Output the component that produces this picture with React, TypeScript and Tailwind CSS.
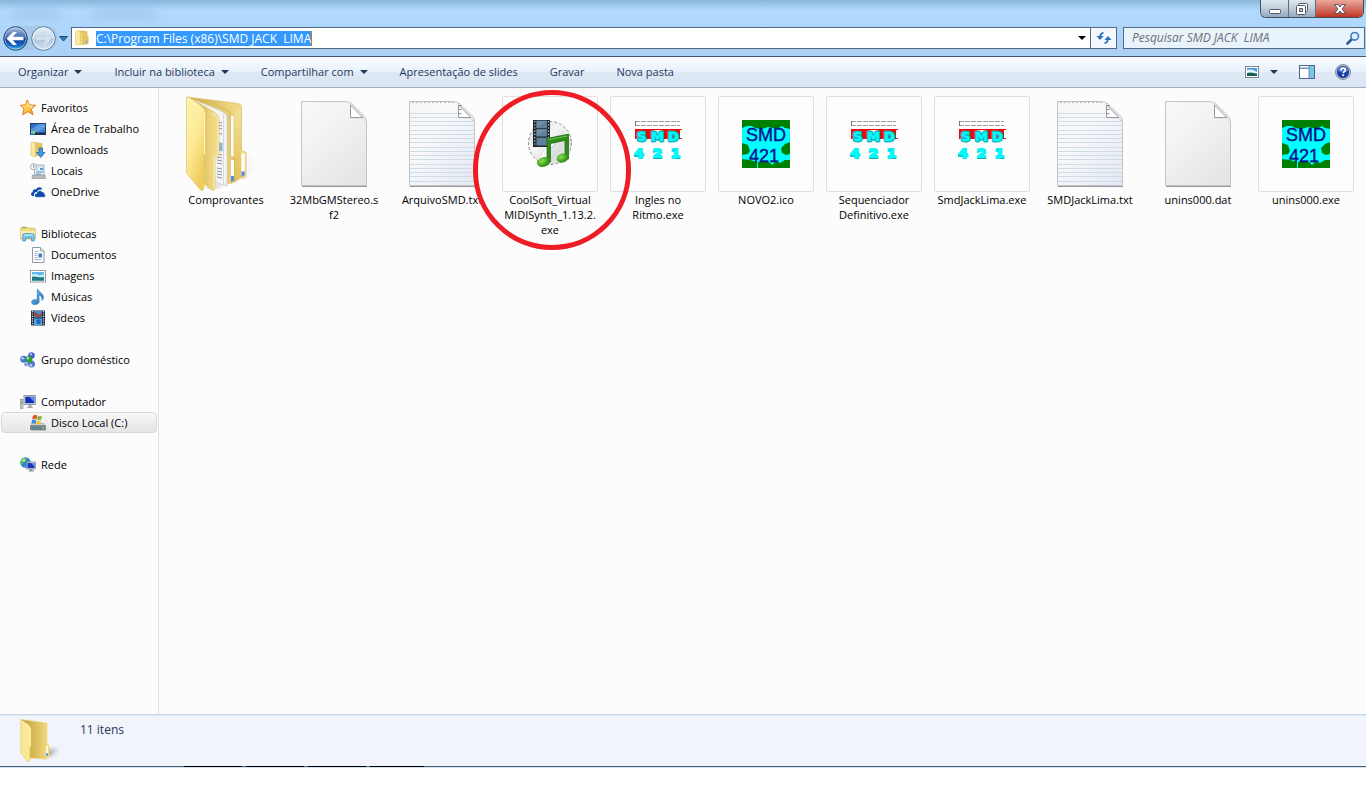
import type { ReactNode } from "react";

/* ---------- small icons (16px) ---------- */

const Icon = ({ children, box = "0 0 16 16" }: { children: ReactNode; box?: string }) => (
  <svg viewBox={box} className="size-4 shrink-0" aria-hidden="true">
    {children}
  </svg>
);

const StarIcon = () => (
  <Icon>
    <defs>
      <linearGradient id="star" x1="0" y1="0" x2="1" y2="1">
        <stop offset="0" stopColor="#fff3a0" />
        <stop offset="0.5" stopColor="#fdc94a" />
        <stop offset="1" stopColor="#f28a1a" />
      </linearGradient>
    </defs>
    <path d="M7.2 0 9.6 4.900 15.600 5.300 11.400 9.100 13 14.700 8 11.600 2.600 14.700 4 8.900 .3 5.300 5.400 4.800Z" fill="url(#star)" stroke="#d9761c" strokeWidth=".9" strokeLinejoin="round" />
    <path d="M7.3 2.300 8.700 5.900 12.800 6.300 9.800 8.700" fill="none" stroke="#fff6c8" strokeWidth=".8" />
  </Icon>
);

const DesktopIcon = () => (
  <Icon>
    <defs>
      <linearGradient id="desk" x1="0" y1="0" x2="1" y2="1">
        <stop offset="0" stopColor="#1d58b8" />
        <stop offset="0.6" stopColor="#4e96e0" />
        <stop offset="1" stopColor="#2a5fb0" />
      </linearGradient>
    </defs>
    <rect x=".5" y="2.500" width="15" height="11" fill="url(#desk)" stroke="#23406e" />
    <path d="M1 8 9 3h6v3L5 11H1Z" fill="#7db8f0" opacity=".4" />
    <rect x="1" y="11.500" width="14.500" height="2" fill="#1b2f4a" />
    <rect x="1" y="10.500" width="2" height="1.500" fill="#6fd16a" />
    <rect x="3" y="10.500" width="2" height="1.500" fill="#f0d23a" />
    <rect x="1" y="12" width="4" height="1.500" fill="#38a8f0" />
  </Icon>
);

const FolderSmall = () => (
  <Icon>
    <path d="M5 .8 13 1.600V6l1.200.5v6.700L12.500 14.200H5Z" fill="#e4c560" stroke="#cfae4b" strokeWidth=".5" />
    <path d="M1.500 1h4.800v10.500L7 12v2.600H1.500Z" fill="#fbe9a0" stroke="#dcbf5f" strokeWidth=".5" />
    <path d="M7 3h1v11H7Z" fill="#f4da83" />
    <rect x="12" y="10.500" width="1.200" height="2.700" fill="#6aa6e0" />
  </Icon>
);

const DownloadsIcon = () => (
  <Icon>
    <path d="M4.500.5 12 1.500V13.500H4.500Z" fill="#e3c566" stroke="#c7a648" strokeWidth=".5" />
    <path d="M1 .5h4.500V15L1 13.500Z" fill="#faeaa8" stroke="#d6b85b" strokeWidth=".6" />
    <path d="M9 6h3.500v4.500H15L10.800 15.500 6.500 10.500H9Z" fill="#3f9ae0" stroke="#1d62a8" strokeWidth=".7" />
  </Icon>
);

const PlacesIcon = () => (
  <Icon>
    <path d="M5.500 2H14v11H4.500V4Z" fill="#e6eff6" stroke="#98a4ae" strokeWidth=".8" />
    <rect x="8" y="4" width="5" height="4" fill="#fff" stroke="#8fb8dc" strokeWidth=".5" />
    <rect x="10" y="5" width="3" height="2" fill="#46a0e4" />
    <path d="M6 9h7M6 11h5" stroke="#5d9bcb" />
    <path d="M2.500 12H15l.5 3.500H2Z" fill="#b8bcc0" stroke="#84898e" strokeWidth=".6" />
    <circle cx="3.500" cy="3.700" r="3" fill="#f6f8f9" stroke="#9da1a5" strokeWidth=".9" />
    <path d="M3.500 1.800V4H5.200" fill="none" stroke="#6b6f74" strokeWidth=".7" />
  </Icon>
);

const OneDriveIcon = () => (
  <Icon>
    <path d="M3.500 12C.7 12.500 .2 9 2.600 8.300 2.500 5.800 5 4.800 6.200 5.600 7.200 2.600 11.500 2.300 12.300 5.600 9.500 4.900 7.500 6 7 8 4.500 8 3.500 10 4 12Z" fill="#0a4aa8" />
    <path d="M6.300 13.200C4 13.100 4 9.500 6.800 9.400 7 6.500 11 5.700 12.300 8.100 14 7.900 14.700 9.300 14.300 10.200 15.900 10.500 15.800 13.200 14 13.200Z" fill="#0a4aa8" stroke="#fcfcfc" strokeWidth=".4" />
  </Icon>
);

const LibraryIcon = () => (
  <Icon>
    <path d="M.8 2.500 2 1h5l1 1.300h6.500l.8 1.200V13H.8Z" fill="#f4dc80" stroke="#c9a846" strokeWidth=".7" />
    <path d="M1 5h14v7H1Z" fill="#fbeeae" />
    <path d="M2.500 1.800h3.500" stroke="#67b35b" />
    <path d="M2.800 15V9.500C2.800 8 3.500 7.500 5 7.500h7c1.500 0 2.200.7 2.200 2V15h-2.700v-3H5.500v3Z" fill="#74c6ee" stroke="#3a8fc4" strokeWidth=".7" />
    <path d="M4 9h9" stroke="#d2f0fd" />
  </Icon>
);

const DocumentIcon = () => (
  <Icon>
    <path d="M2.500.5h8L14 4v11.500H2.500Z" fill="#fdfdfe" stroke="#858d96" strokeWidth=".9" />
    <path d="M10.500.5V4H14" fill="#dfe5ea" stroke="#858d96" strokeWidth=".7" />
    <path d="M4.500 4.500h4M4.500 6.500h3M4.500 8.500h3M4.500 10.500h3M4.500 12.500h7" stroke="#8ea3c9" strokeWidth=".8" />
    <rect x="8.500" y="6.500" width="3.500" height="4" fill="#3f7fca" />
  </Icon>
);

const PictureIcon = () => (
  <Icon>
    <rect x=".5" y="2.500" width="15" height="11.500" fill="#fff" stroke="#8c949c" strokeWidth=".9" />
    <rect x="2" y="4" width="12" height="8.500" fill="#63b5ea" />
    <path d="M2 6.500C5 5.500 7 6 9 7.500L14 6.500V9H2Z" fill="#cfeefa" />
    <path d="M2 9C6 7.500 9 10.500 14 9v3.500H2Z" fill="#238064" />
    <path d="M2 10.500h12v2H2Z" fill="#1c6ea8" opacity=".7" />
  </Icon>
);

const MusicIcon = () => (
  <Icon>
    <defs>
      <linearGradient id="note" x1="0" y1="0" x2="1" y2="1">
        <stop offset="0" stopColor="#7dcaf8" />
        <stop offset="1" stopColor="#1164b4" />
      </linearGradient>
    </defs>
    <path d="M8.200.5c.4 2.700 5.500 3.700 5.300 8-.1 1.500-1 2.500-1.800 3 1-3.300-1-4.800-2.700-5.300l.2 6.300c0 3.700-7.700 4.300-7.700.8C1.500 10.600 5 10 7.200 11V.5Z" fill="url(#note)" stroke="#2276c2" strokeWidth=".5" />
  </Icon>
);

const VideoIcon = () => (
  <Icon>
    <rect x="1" y=".5" width="14" height="15" fill="#20313f" />
    <rect x="4" y="1" width="8" height="6.500" fill="#3a92dc" />
    <rect x="4" y="8.500" width="8" height="6.500" fill="#4fa6e8" />
    <path d="M4 2 7 3l2 2 3-3v4L9 7H6L4 5Z" fill="#a34a3c" />
    <path d="M6 10l3-1 2 2-1 3-3 0Z" fill="#2266bb" />
    <path d="M2.500 1v14M13.500 1v14" stroke="#d9e2e8" strokeWidth="1.200" strokeDasharray="1.200 1.200" />
  </Icon>
);

const HomegroupIcon = () => (
  <Icon>
    <circle cx="11.500" cy="3.600" r="3.300" fill="#3f67cd" />
    <circle cx="3.700" cy="7.300" r="3.500" fill="#4a79d8" />
    <circle cx="11.500" cy="12" r="3.500" fill="#5579cf" />
    <circle cx="6" cy="12.300" r="1.900" fill="#7f9fe0" />
    <circle cx="8.900" cy="7.500" r="3.400" fill="#2f9e3a" />
    <circle cx="7.900" cy="6.300" r="1.300" fill="#a6e39a" />
    <circle cx="2.700" cy="6.200" r="1.200" fill="#b6cdf7" />
    <circle cx="11" cy="2.300" r="1.100" fill="#b6cdf7" />
    <circle cx="11" cy="13.300" r="1.300" fill="#c6d6f6" />
  </Icon>
);

const ComputerIcon = () => (
  <Icon>
    <rect x=".5" y="5.500" width="2.500" height="9" fill="#c7ccd0" stroke="#7d8388" strokeWidth=".6" />
    <rect x="1.200" y="7" width="1" height="3" fill="#57b749" />
    <rect x="4" y="1.500" width="11.500" height="9" fill="#d7dce0" stroke="#848a90" strokeWidth=".8" />
    <rect x="5.300" y="2.700" width="9" height="6.500" fill="#1130b8" />
    <path d="M9 2.700h5.300V8Z" fill="#5d8bec" />
    <path d="M8.500 11h3v1.500l2 1.500H6.500l2-1.500Z" fill="#a4aab0" />
  </Icon>
);

const DriveIcon = () => (
  <Icon>
    <path d="M2.500 8.500h11l2 2.500H.5Z" fill="#cfd4d7" stroke="#858c91" strokeWidth=".5" />
    <rect x=".5" y="10.700" width="15" height="4.300" rx=".6" fill="#7f898f" stroke="#5c656b" strokeWidth=".6" />
    <rect x="2" y="12.200" width="10" height="1.400" fill="#4f8796" />
    <rect x="12.500" y="12.100" width="1.600" height="1.500" fill="#63e33c" />
    <path d="M3 .8C4.500-.3 6-.2 7.200.5L6.500 4.300C5 3.500 3.800 3.600 2.200 4.400Z" fill="#e8532a" />
    <path d="M7.800.7C9.200 1.500 10.500 1.500 12 .9L11.200 4.700C9.800 5.300 8.400 5.200 7 4.500Z" fill="#7ab93c" />
    <path d="M2 5.100C3.500 4.300 5 4.400 6.300 5.100L5.600 8.800C4.200 8.100 2.900 8.200 1.300 8.900Z" fill="#3f8fe0" />
    <path d="M6.900 5.300C8.300 6 9.600 6 11 5.400L10.300 9.100C9 9.700 7.600 9.600 6.200 8.900Z" fill="#f7c331" />
  </Icon>
);

const NetworkIcon = () => (
  <Icon>
    <circle cx="5.500" cy="5.500" r="5.200" fill="#2b86d4" />
    <path d="M2 2.200C4 .2 6 .7 7 1.700L5 4.700 2.500 5.700 1 8.700C0 5.700 .5 3.700 2 2.200ZM7 5.700l3-2 .5 3-2 3Z" fill="#64c04a" />
    <circle cx="3.800" cy="3.200" r="1.300" fill="#d6f2f8" opacity=".7" />
    <rect x="6.500" y="5" width="9" height="7" fill="#c9d0d6" stroke="#6d7880" strokeWidth=".6" />
    <rect x="7.500" y="6" width="7" height="5" fill="#1238c4" />
    <path d="M11 6h3.500V9.500Z" fill="#6fa0f0" />
    <path d="M9.500 12h3v1.500H14v1H8.500v-1h1Z" fill="#88939c" />
  </Icon>
);

/* ---------- large file pictures ---------- */

const OpenFolder = () => (
  <svg viewBox="0 0 96 96" className="size-24" aria-hidden="true">
    <defs>
      <linearGradient id="fa" x1="0" y1="0" x2=".6" y2="1">
        <stop offset="0" stopColor="#fdf3ae" />
        <stop offset="0.5" stopColor="#fdeb98" />
        <stop offset="1" stopColor="#efcb5a" />
      </linearGradient>
      <linearGradient id="fb" x1="0" y1="0" x2="1" y2="0">
        <stop offset="0" stopColor="#c9a545" />
        <stop offset="0.7" stopColor="#ecd27a" />
        <stop offset="1" stopColor="#f3df92" />
      </linearGradient>
      <linearGradient id="fc" x1="0" y1="0" x2="0" y2="1">
        <stop offset="0" stopColor="#f4e29a" />
        <stop offset="1" stopColor="#e0b948" />
      </linearGradient>
      <linearGradient id="fs" x1="0" y1="0" x2="1" y2="0">
        <stop offset="0" stopColor="#999" stopOpacity=".5" />
        <stop offset="1" stopColor="#ddd" stopOpacity="0" />
      </linearGradient>
    </defs>
    <path d="M28 92 66 58 88 70 60 82 40 93Z" fill="url(#fs)" opacity=".7" />
    <path d="M9 1 60 7.500Q63.500 8 63.500 12V54.500l4.500 2V81l-3 1.500-2-.7-7 4.700V20Z" fill="url(#fb)" stroke="#dcc06a" strokeWidth=".8" />
    <path d="M56 18V86L63 81V12Z" fill="url(#fc)" opacity=".8" />
    <path d="M63.500 57.500h3.200V78l-3.200 2Z" fill="#fff" />
    <path d="M63.500 75.500h3.200V79l-3.200 2Z" fill="#4b8bea" />
    <path d="M9 1 49 14Q52.500 15 52.500 19V60l4 2V85.500l-3 1.800-2-.5-4.500 3Z" fill="#e8cd78" stroke="#d3b557" strokeWidth=".8" />
    <path d="M53 64h3V83.500l-3 1.500Z" fill="#fff" />
    <path d="M53 80h3V84.500l-3 1.500Z" fill="#4b8bea" />
    <path d="M14 3 42 14.500Q49 17 49 22V90L40 87 34 80Z" fill="#f4f5f6" stroke="#c4c6c8" strokeWidth=".6" />
    <path d="M45.500 18V89" stroke="#d5d7da" />
    <path d="M39 26l5 1M39 29l5 1M39 32l5 1M39 37l5 1M39 58l5 1M39 61l5 1M39 64l5 1M39 67l5 1M39 72l5 1M39 75l5 1M39 78l5 1M39 81l5 1" stroke="#83888d" strokeWidth=".9" />
    <path d="M39 46 44.500 47V55.500L39 54.500Z" fill="#85b6d4" />
    <path d="M12 2 36 16Q41 19 41 24V60l-4 2.500V92q-.5 3-2.500 2.500L26 88Z" fill="url(#fb)" stroke="#dfc368" strokeWidth=".8" />
    <path d="M34 17 38 20Q40 22 40 26V59l-4 2.500V92" fill="none" stroke="#f9eaa8" strokeWidth="1.500" />
    <path d="M8.500 1.500Q9 0 12 2L22 9Q27.500 13 27.500 19V58l-1.500 3V91q-.5 4.500-3 3.500L8.500 77Z" fill="url(#fa)" stroke="#e3ca6c" strokeWidth=".8" />
    <path d="M9.500 2 22 10.500Q26.500 14 26.500 19V58" fill="none" stroke="#fffbd8" strokeWidth=".7" />
  </svg>
);

const Page = ({ lined = false }: { lined?: boolean }) => (
  <svg viewBox="0 0 96 96" className="size-24" aria-hidden="true">
    <defs>
      <linearGradient id="pg" x1="0" y1="0" x2=".7" y2="1">
        <stop offset="0" stopColor="#f8f8f8" />
        <stop offset="0.3" stopColor="#f5f5f5" />
        <stop offset="1" stopColor="#e6e6e6" />
      </linearGradient>
      <linearGradient id="pl" x1="0" y1="0" x2="1" y2="1">
        <stop offset="0" stopColor="#f4f4f5" />
        <stop offset="0.3" stopColor="#fafafb" />
        <stop offset="1" stopColor="#e5e8f3" />
      </linearGradient>
      <linearGradient id="pf" x1="0" y1="1" x2="1" y2="0">
        <stop offset="0.4" stopColor="#fff" />
        <stop offset="1" stopColor="#d4d6d8" />
      </linearGradient>
    </defs>
    <path d="M16 90.500H81" stroke="#97999d" strokeWidth="1" />
    <path d="M15.500 5.500H59Q63 5.500 66 8L78 19.500Q80.500 22 80.500 26V89.500H15.500Z" fill={lined ? "url(#pl)" : "url(#pg)"} stroke="#c2c4c7" strokeLinejoin="round" />
    {lined && (
      <g>
        <path d="M16 17.500H63M16 21.500H63M16 25.500H80M16 29.500H80M16 34.500H80M16 38.500H80M16 42.500H80M16 46.500H80M16 51.500H80M16 55.500H80M16 59.500H80M16 63.500H80M16 68.500H80M16 72.500H80M16 76.500H80M16 80.500H80M16 85.500H80" stroke="#cddde8" />
        <path d="M18 6.500H62" stroke="#a5a8ac" strokeDasharray="1.500 2.500" />
      </g>
    )}
    <path d="M64 7 79 21V25L76 22H64.500V9Z" fill="#f2f3f3" stroke="#c8cacc" strokeWidth=".5" />
    <path d="M64.500 9V21.500H77Z" fill="url(#pf)" stroke="#97999c" strokeLinejoin="round" />
    {lined && <path d="M66 9V20" stroke="#8b8d91" strokeWidth="3" strokeDasharray="1 3" />}
  </svg>
);

const Framed = ({ children }: { children: ReactNode }) => (
  <span className="flex size-24 items-center justify-center rounded-xs border border-[#dfdfdf] bg-[#fdfdfd]">
    <svg viewBox="0 0 48 48" className="size-12" aria-hidden="true">
      {children}
    </svg>
  </span>
);

const MidiSynth = () => (
  <Framed>
    <defs>
      <linearGradient id="cd" x1="0" y1="0" x2="1" y2="1">
        <stop offset="0" stopColor="#cfd1d3" />
        <stop offset="0.4" stopColor="#f6f6f6" />
        <stop offset="0.7" stopColor="#dadbdc" />
        <stop offset="1" stopColor="#f4f4f4" />
      </linearGradient>
      <radialGradient id="gn" cx=".4" cy=".35" r=".7">
        <stop offset="0" stopColor="#8ae34a" />
        <stop offset="1" stopColor="#1e7a10" />
      </radialGradient>
    </defs>
    <circle cx="24" cy="23" r="21.500" fill="url(#cd)" stroke="#777" strokeWidth=".8" strokeDasharray="3 2" />
    <path d="M24 23 12 41 20 44ZM24 23 42 11 44 18Z" fill="#fff" opacity=".8" />
    <circle cx="24" cy="23" r="5" fill="#f7f7f7" stroke="#b7bcc2" />
    <rect x="7" y="0" width="17" height="27" fill="#22272d" />
    <path d="M10.500.8h10.500v7.500H10.500ZM10.500 9.300h10.500v7.200H10.500ZM10.500 17.700h10.500v7.800H10.500Z" fill="#5f7f9f" />
    <path d="M10.500.8h10.500L10.500 8.300ZM10.500 9.300h10.500L10.500 16.500Z" fill="#7d9bb8" opacity=".6" />
    <path d="M8.800 1v25M22.500 1v25" stroke="#cfd4d9" strokeWidth="1.200" strokeDasharray="1.200 2" />
    <path d="M21 18.500 42.500 14V39H39V20.500L24.500 23.500V42H21Z" fill="#2f8c1b" stroke="#1d650f" strokeWidth=".7" />
    <path d="M22.500 19.800 41 16" stroke="#6bc44c" />
    <ellipse cx="17.500" cy="42" rx="6.700" ry="4.800" transform="rotate(-18 17.500 42)" fill="url(#gn)" />
    <ellipse cx="36.500" cy="38" rx="6" ry="4.600" transform="rotate(-18 36.500 38)" fill="url(#gn)" />
  </Framed>
);

const SmdRed = () => (
  <Framed>
    <path d="M1 1.500H46M1 5.500H46" stroke="#9c9c9c" strokeDasharray="5 1" />
    <path d="M1.500 1V6" stroke="#777" />
    <path d="M1 9H48V10H46V18H48V19H1Z" fill="#f50808" />
    <path d="M19 10h9l-4.500 5Z" fill="#fff" />
    <g fontFamily="DejaVu Sans, Verdana, sans-serif" fontWeight="700" fill="#00ffff">
      <g fontSize="13" stroke="#12b9bd" strokeWidth="2.800" paintOrder="stroke" strokeLinejoin="round">
        <text x="3" y="20.500">S</text>
        <text x="17" y="20.500">M</text>
        <text x="34" y="20.500">D</text>
      </g>
      <g fontSize="13" stroke="#00f0f0" strokeWidth="2.200" paintOrder="stroke">
        <text x="0.500" y="38">4</text>
        <text x="19" y="38">2</text>
        <text x="37" y="38">1</text>
      </g>
    </g>
    <path d="M0 33.500v2.500h5M20 31v1.500M19.500 38.500h8.500M39 30h2M42.500 38.500h3" fill="none" stroke="#1d8f94" strokeWidth=".8" />
  </Framed>
);

const SmdGreen = () => (
  <Framed>
    <rect width="48" height="48" fill="#008000" />
    <path d="M0 8 5 6 10 6 13 8 20 9 26 7 35 9 40 6 43 8 48 9V22L43 24 39 28 40 33 44 35 48 34V40L43 40 38 43 34 41 30 45 27 42 20 42 16 42V48H15V42L8 40 0 39V35L6 34 8 31 6 25 0 23Z" fill="#00ffff" />
    <g fontFamily="Liberation Sans, Arial, sans-serif" fontSize="18" fill="#00138c" stroke="#00138c" strokeWidth=".4">
      <text x="4" y="21">SMD</text>
      <text x="7" y="41.500">421</text>
    </g>
  </Framed>
);

/* ---------- data ---------- */

type NavItem = { name: string; icon: ReactNode; selected?: boolean };

const groups: { root: NavItem; items: NavItem[] }[] = [
  {
    root: { name: "Favoritos", icon: <StarIcon /> },
    items: [
      { name: "Área de Trabalho", icon: <DesktopIcon /> },
      { name: "Downloads", icon: <DownloadsIcon /> },
      { name: "Locais", icon: <PlacesIcon /> },
      { name: "OneDrive", icon: <OneDriveIcon /> },
    ],
  },
  {
    root: { name: "Bibliotecas", icon: <LibraryIcon /> },
    items: [
      { name: "Documentos", icon: <DocumentIcon /> },
      { name: "Imagens", icon: <PictureIcon /> },
      { name: "Músicas", icon: <MusicIcon /> },
      { name: "Vídeos", icon: <VideoIcon /> },
    ],
  },
  { root: { name: "Grupo doméstico", icon: <HomegroupIcon /> }, items: [] },
  {
    root: { name: "Computador", icon: <ComputerIcon /> },
    items: [{ name: "Disco Local (C:)", icon: <DriveIcon />, selected: true }],
  },
  { root: { name: "Rede", icon: <NetworkIcon /> }, items: [] },
];

const files: { lines: string[]; picture: ReactNode; circled?: boolean }[] = [
  { lines: ["Comprovantes"], picture: <OpenFolder /> },
  { lines: ["32MbGMStereo.s", "f2"], picture: <Page /> },
  { lines: ["ArquivoSMD.txt"], picture: <Page lined /> },
  { lines: ["CoolSoft_Virtual", "MIDISynth_1.13.2.", "exe"], picture: <MidiSynth />, circled: true },
  { lines: ["Ingles no", "Ritmo.exe"], picture: <SmdRed /> },
  { lines: ["NOVO2.ico"], picture: <SmdGreen /> },
  { lines: ["Sequenciador", "Definitivo.exe"], picture: <SmdRed /> },
  { lines: ["SmdJackLima.exe"], picture: <SmdRed /> },
  { lines: ["SMDJackLima.txt"], picture: <Page lined /> },
  { lines: ["unins000.dat"], picture: <Page /> },
  { lines: ["unins000.exe"], picture: <SmdGreen /> },
];

const commands = [
  { name: "Organizar", menu: true },
  { name: "Incluir na biblioteca", menu: true },
  { name: "Compartilhar com", menu: true },
  { name: "Apresentação de slides", menu: false },
  { name: "Gravar", menu: false },
  { name: "Nova pasta", menu: false },
];

const Caret = ({ dark = false }: { dark?: boolean }) => (
  <svg viewBox="0 0 8 4" className={dark ? "h-1 w-2 fill-black" : "h-1 w-2 fill-[#1e395b]"} aria-hidden="true">
    <path d="M0 0H8L4 4Z" />
  </svg>
);

/* ---------- window parts ---------- */

function TitleArea() {
  return (
    <header className="relative flex flex-col border-b border-[#46586d] bg-linear-to-b from-[#8ab4da] via-[#b1d9fe] via-18% to-[#abd1f5]">
      <div className="absolute top-3 left-3 flex gap-8 opacity-30 blur-xs" aria-hidden="true">
        <span className="h-1 w-12 bg-[#4d7ba5]" />
        <span className="h-1 w-16 bg-[#4d7ba5]" />
      </div>
      <div className="flex h-[27px] items-start justify-end pr-[2px]">
        <div className="flex h-[18px] overflow-hidden rounded-b-md border border-t-0 border-[#46505c]">
          <button aria-label="Minimizar" className="flex w-7 items-center justify-center border-r border-[#5e6f80] bg-linear-to-b from-[#dfe7ef] via-[#c3d0dd] via-45% to-[#93a9bf]">
            <svg viewBox="0 0 14 12" className="h-3 w-3.5"><rect x="1.500" y="6.500" width="11" height="4" rx="1" fill="#fff" stroke="#535666" /></svg>
          </button>
          <button aria-label="Restaurar" className="flex w-[27px] items-center justify-center border-r border-[#5e6f80] bg-linear-to-b from-[#dfe7ef] via-[#c3d0dd] via-45% to-[#93a9bf]">
            <svg viewBox="0 0 14 12" className="h-3 w-3.5" stroke="#535666">
              <rect x="3.500" y=".5" width="9" height="8" rx="1" fill="#fff" />
              <rect x="1.500" y="2.500" width="9" height="9" rx="1" fill="#fff" />
              <path d="M4.500 5.500h3v3h-3Z" fill="#b6c4d2" />
            </svg>
          </button>
          <button aria-label="Fechar" className="flex w-[47px] items-center justify-center bg-linear-to-b from-[#eaa99a] via-[#d4766a] via-45% to-[#c2321c]">
            <svg viewBox="0 0 14 12" className="h-3 w-3.5">
              <path d="M1.500 1.500H5L7 4 9 1.500h3.500L9 6l3.500 4.500H9L7 8l-2 2.500H1.500L5 6Z" fill="#fff" stroke="#535666" strokeLinejoin="round" />
            </svg>
          </button>
        </div>
      </div>

      <div className="flex h-[29px] items-start pr-px">
        <div className="flex w-[71px] shrink-0">
          <svg viewBox="0 0 71 26" className="-mt-0.5 h-[26px] w-[71px]" aria-hidden="true">
            <defs>
              <linearGradient id="bk" x1="0" y1="0" x2="0" y2="1">
                <stop offset="0" stopColor="#b4c6e4" />
                <stop offset="0.45" stopColor="#3d68b4" />
                <stop offset="0.5" stopColor="#0c3c94" />
                <stop offset="0.8" stopColor="#1568c4" />
                <stop offset="1" stopColor="#4fc8f8" />
              </linearGradient>
              <linearGradient id="fw" x1="0" y1="0" x2="0" y2="1">
                <stop offset="0" stopColor="#e4edf6" />
                <stop offset="0.48" stopColor="#cbdaea" />
                <stop offset="0.52" stopColor="#a9c2dc" />
                <stop offset="1" stopColor="#d8e8f6" />
              </linearGradient>
            </defs>
            <path d="M12 .8H48Q58 2 58 13T48 25H12Z" fill="#a3c2e0" opacity=".6" />
            <circle cx="15.500" cy="13.500" r="11.800" fill="url(#bk)" stroke="#2f4a74" />
            <circle cx="15.500" cy="13.500" r="10.600" fill="none" stroke="#d4e4f6" strokeWidth=".8" opacity=".7" />
            <path d="M6.500 13.500 13 7H17L12.800 11.800H23.500V15.200H12.800L17 20H13Z" fill="#fff" />
            <circle cx="43.500" cy="13.500" r="11.800" fill="url(#fw)" stroke="#5e7da0" />
            <circle cx="43.500" cy="13.500" r="10.600" fill="none" stroke="#f2f8fd" strokeWidth=".9" />
            <path d="M52 13.500 45.500 7.300H42L46 11.900H35.500V15.100H46L42 19.700H45.500Z" fill="#d6e2ee" stroke="#bccfe2" strokeWidth=".6" />
            <path d="M59.500 11.500H67.500L63.500 16Z" fill="#2e7fbf" stroke="#1c3c64" strokeWidth=".9" />
          </svg>
        </div>
        <div className="flex h-[22px] min-w-0 grow items-center border border-[#546a82] bg-white pl-[2px]">
          <FolderSmall />
          <input
            aria-label="Endereço"
            defaultValue={"C:\\Program Files (x86)\\SMD JACK  LIMA"}
            spellCheck={false}
            className="ml-1.5 h-[15px] min-w-0 field-sizing-content border-r border-[#d9730f] bg-[#3399ff] text-xs leading-[15px] text-white outline-none"
          />
          <button aria-label="Locais anteriores" className="ml-auto flex h-full w-4 items-center justify-center">
            <Caret dark />
          </button>
        </div>
        <button aria-label="Atualizar" className="flex h-[22px] w-[26px] shrink-0 items-center justify-center border border-l-0 border-[#546a82] bg-[#f3f8fd]">
          <svg viewBox="0 0 16 14" className="h-3.5 w-4" fill="none" stroke="#2b6fc0" strokeWidth="1.800">
            <path d="M7.500 1.800Q4.200 2.200 4.200 6" />
            <path d="M8.500 12.200Q11.800 11.800 11.800 8" />
            <path d="M.5 5H7.500L4 9ZM8.500 9H15.500L12 5Z" fill="#2b6fc0" stroke="none" />
          </svg>
        </button>
        <div className="ml-1.5 flex h-[22px] w-[242px] shrink-0 items-center border border-[#546a82] bg-[#e9f3fc] pr-1 pl-2">
          <input
            aria-label="Pesquisar"
            placeholder="Pesquisar SMD JACK  LIMA"
            className="min-w-0 grow bg-transparent text-xs italic outline-none placeholder:text-[#6d7073]"
          />
          <svg viewBox="0 0 14 14" className="size-3.5" fill="none" aria-hidden="true">
            <path d="M1.500 12.500 6 8" stroke="#2a5c9c" strokeWidth="2.600" strokeLinecap="round" />
            <circle cx="8.700" cy="5.300" r="3.800" fill="#dff0fd" stroke="#3f7cc4" strokeWidth="1.600" />
          </svg>
        </div>
      </div>
    </header>
  );
}

function CommandBar() {
  return (
    <nav className="flex h-[31px] shrink-0 items-center justify-between border-b border-[#a0afc3] bg-[linear-gradient(#fbfdff,#e8f1fb_49%,#dfe8f5_50%,#dbe5f3)] pr-[15px] pl-[18px] text-[#1e395b]">
      <div className="flex gap-8">
        {commands.map((c) => (
          <button key={c.name} className="flex items-center gap-1.5 whitespace-nowrap">
            {c.name}
            {c.menu && <Caret />}
          </button>
        ))}
      </div>
      <div className="flex items-center">
        <button aria-label="Modo de exibição" className="mr-[11px]">
          <svg viewBox="0 0 14 12" className="h-3 w-3.5">
            <rect x=".5" y=".5" width="13" height="11" fill="#fff" stroke="#7b8895" />
            <rect x="2" y="2" width="10" height="8" fill="#4a9bdc" />
            <path d="M2 4Q7 2.500 12 6V7H2Z" fill="#e4f5fb" />
            <path d="M2 7Q7 5.500 12 8.500V10H2Z" fill="#17604f" />
          </svg>
        </button>
        <button aria-label="Mais opções" className="mr-[21px] py-2"><Caret /></button>
        <button aria-label="Painel de visualização" className="mr-5">
          <svg viewBox="0 0 16 14" className="h-3.5 w-4">
            <rect x=".5" y=".5" width="15" height="13" fill="#fff" stroke="#4a6689" />
            <path d="M1 2.500H10" stroke="#b9c9dc" />
            <rect x="10" y="1" width="5" height="12" fill="#79c4ec" />
            <path d="M10 1V13M1 3.500H10" stroke="#5a7ba2" strokeWidth=".8" />
          </svg>
        </button>
        <button aria-label="Ajuda">
          <svg viewBox="0 0 16 16" className="size-4">
            <circle cx="8" cy="8" r="7.500" fill="#c9cfd8" stroke="#6f7785" strokeWidth=".8" />
            <circle cx="8" cy="8" r="6.200" fill="#1c3fa8" />
            <path d="M2.500 7A5.600 5.600 0 0 1 13.500 7Q8 9 2.500 7Z" fill="#6f92e0" opacity=".7" />
            <path d="M5.800 6.300Q6 4.200 8.200 4.200T10.300 6.100Q10.300 7.200 9 7.900 8.200 8.400 8.200 9.300" fill="none" stroke="#fff" strokeWidth="1.700" />
            <rect x="7.300" y="10.400" width="1.800" height="1.700" fill="#fff" />
          </svg>
        </button>
      </div>
    </nav>
  );
}

function NavLink({ item, child = false }: { item: NavItem; child?: boolean }) {
  const base = "mx-px flex h-[21px] items-center gap-[5px] rounded-sm border whitespace-nowrap";
  const indent = child ? "pl-7" : "pl-[18px]";
  const fill = item.selected ? "border-[#d9d9d9] bg-linear-to-b from-[#f8f8f8] to-[#e5e5e5]" : "border-transparent";
  return (
    <a href="#" className={`${base} ${indent} ${fill}`}>
      {item.icon}
      <span className="pt-0.5">{item.name}</span>
    </a>
  );
}

function Sidebar() {
  return (
    <aside className="flex w-[159px] shrink-0 flex-col gap-[21px] border-r border-[#d6e5f5] pt-[9px]">
      {groups.map((g) => (
        <div key={g.root.name}>
          <NavLink item={g.root} />
          {g.items.map((i) => (
            <NavLink key={i.name} item={i} child />
          ))}
        </div>
      ))}
    </aside>
  );
}

function Files() {
  return (
    <main className="flex grow flex-wrap content-start pt-2 pl-[13px]">
      {files.map((f) => (
        <figure key={f.lines.join("")} className="relative flex w-[108px] flex-col items-center">
          {f.picture}
          <figcaption className="text-center leading-[15px] whitespace-nowrap">
            {f.lines.map((l) => (
              <span key={l} className="block">{l}</span>
            ))}
          </figcaption>
          {f.circled && (
            <span className="pointer-events-none absolute -top-1.5 -left-[23px] z-10 h-40 w-[158px] rounded-full border-5 border-[#ee1c25]" />
          )}
        </figure>
      ))}
    </main>
  );
}

function DetailsPane() {
  return (
    <footer className="shrink-0 border-t border-[#c3d5e8] bg-[#f1f4fb] text-[#1e395b]">
      <div className="flex h-[51px] border-t border-[#dfe9f4] pl-[18px]">
        <svg viewBox="0 0 44 48" className="mt-0.5 h-12 w-11" aria-hidden="true">
          <defs>
            <linearGradient id="df" x1="0" y1="0" x2="1" y2="0">
              <stop offset="0" stopColor="#bf9b37" />
              <stop offset="1" stopColor="#f4dd80" />
            </linearGradient>
            <radialGradient id="ds">
              <stop offset="0" stopColor="#777" stopOpacity=".6" />
              <stop offset="1" stopColor="#999" stopOpacity="0" />
            </radialGradient>
          </defs>
          <ellipse cx="31" cy="35" rx="12" ry="6" transform="rotate(-25 31 35)" fill="url(#ds)" />
          <path d="M3 1.500 29 5V26l2 1v12l-3 2-16-1Z" fill="url(#df)" stroke="#eed476" strokeWidth=".6" />
          <path d="M28 28h2v9l-2 1Z" fill="#fff8d0" />
          <rect x="28" y="35" width="2" height="3" fill="#6aa6e0" />
          <path d="M3 1.500 11 7Q13 9 13 12V28l-1 2V42L10 44 3 35Z" fill="#fbe894" stroke="#dfc25e" strokeWidth=".6" />
          <path d="M4 3.500 12 10V28" fill="none" stroke="#fffbe0" strokeWidth=".7" />
        </svg>
        <p className="mt-1.5 ml-[18px] text-xs leading-4">11 itens</p>
      </div>
      <div className="flex h-px gap-1 bg-[#506277] pl-[184px]" aria-hidden="true">
        <span className="w-[58px] bg-black" />
        <span className="w-[58px] bg-black" />
        <span className="w-[58px] bg-black" />
        <span className="w-[54px] bg-black" />
      </div>
      <div className="h-px bg-[#cfe0f2]" />
    </footer>
  );
}

export default function App() {
  return (
    <div className="flex min-h-screen flex-col bg-white pb-8 font-['Open_Sans','Noto_Sans',sans-serif] text-[11px] text-black">
      <TitleArea />
      <CommandBar />
      <div className="flex grow bg-[#fcfcfc]">
        <Sidebar />
        <Files />
      </div>
      <DetailsPane />
    </div>
  );
}
